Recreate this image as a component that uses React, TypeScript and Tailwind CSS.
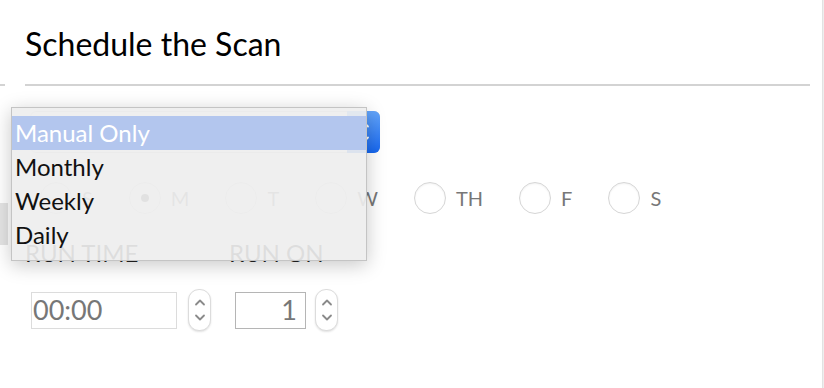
import React from "react";

const Chevrons = ({ color = "#8a8a8a", w = 12 }: { color?: string; w?: number }) => (
  <svg width={w} height="30" viewBox="0 0 12 30" fill="none">
    <path d="M2 9.5 L6 5.5 L10 9.5" stroke={color} strokeWidth="1.8" strokeLinecap="round" strokeLinejoin="round" />
    <path d="M2 20.5 L6 24.5 L10 20.5" stroke={color} strokeWidth="1.8" strokeLinecap="round" strokeLinejoin="round" />
  </svg>
);

const Spinner = () => (
  <div className="w-[23px] h-[42px] rounded-[11px] border border-[#dcdcdc] bg-white shadow-[0_1px_2px_rgba(0,0,0,0.12)] flex items-center justify-center">
    <Chevrons />
  </div>
);

const Radio = ({ label, checked }: { label: string; checked?: boolean }) => (
  <div className="flex items-center gap-[10px]">
    <div className="w-[32px] h-[32px] rounded-full border-[1.5px] border-[#d6d6d6] bg-white shadow-[inset_0_1px_2px_rgba(0,0,0,0.06)] flex items-center justify-center">
      {checked && <div className="w-[8px] h-[8px] rounded-full bg-[#555]" />}
    </div>
    <span className="text-[20px] text-[#777]">{label}</span>
  </div>
);

export default function App() {
  const days = ["S", "M", "T", "W", "TH", "F", "S"];
  const items = ["Manual Only", "Monthly", "Weekly", "Daily"];
  return (
    <div className="relative w-[824px] h-[388px] overflow-hidden bg-white font-[Lato,sans-serif] flex">
      {/* left fragments of neighbouring panel */}
      <div className="w-[8px] shrink-0 flex flex-col">
        <div className="mt-[84px] w-[5px] h-[2px] bg-[#d3d3d3]" />
        <div className="mt-[117px] w-[8px] h-[42px] bg-[#e4e4e4]" />
      </div>

      {/* main panel */}
      <div className="w-[814px] shrink-0 pl-[17px] pr-[12px] flex flex-col">
        <h1 className="mt-[24px] text-[32px] leading-[40px] text-black font-normal">Schedule the Scan</h1>
        <div className="mt-[20px] h-[2px] bg-[#d3d3d3]" />

        {/* select */}
        <div className="mt-[25px] ml-[5px] w-[350px] h-[42px] flex rounded-[6px] border border-[#cfcfcf] bg-white">
          <div className="flex-1 flex items-center pl-[37px] text-[21px] text-[#555]">Manual Only</div>
          <div className="w-[33px] h-[42px] -mt-px -mr-px rounded-r-[6px] bg-gradient-to-b from-[#62a4fa] to-[#1466ef] flex items-center justify-center">
            <Chevrons color="#ffffff" />
          </div>
        </div>

        {/* radios */}
        <div className="mt-[29px] ml-[15px] flex gap-[36px]">
          {days.map((d, i) => (
            <Radio key={i} label={d} checked={i === 1} />
          ))}
        </div>

        {/* labels */}
        <div className="mt-[27px] flex text-[24px] leading-[24px] text-[#222]">
          <span className="w-[204px]">RUN TIME</span>
          <span>RUN ON</span>
        </div>

        {/* inputs */}
        <div className="mt-[24px] ml-[6px] flex items-center">
          <div className="w-[146px] h-[37px] border border-[#dcdcdc] bg-white flex items-center pl-[1px] text-[27px] text-[#777]">00:00</div>
          <div className="ml-[11px]"><Spinner /></div>
          <div className="ml-[24px] w-[71px] h-[37px] border border-[#b5b5b5] bg-white flex items-center justify-end pr-[8px] text-[27px] text-[#777]">1</div>
          <div className="ml-[9px]"><Spinner /></div>
        </div>
      </div>

      {/* right edge */}
      <div className="flex-1 bg-[#eeeeee] border-l border-[#e2e2e2]" />

      {/* open native select popup */}
      <div className="absolute left-[11px] top-[107px] w-[356px] h-[154px] bg-[rgba(238,238,238,0.92)] border border-[#c4c4c4] shadow-[0_4px_18px_rgba(0,0,0,0.22)] pt-[8px]">
        {items.map((it, i) => (
          <div
            key={it}
            className={
              i === 0
                ? "h-[34px] leading-[34px] pl-[3px] text-[24px] text-white bg-[#b3c6ee]"
                : "h-[34px] leading-[34px] pl-[3px] text-[24px] text-[#111]"
            }
          >
            {it}
          </div>
        ))}
      </div>
    </div>
  );
}
